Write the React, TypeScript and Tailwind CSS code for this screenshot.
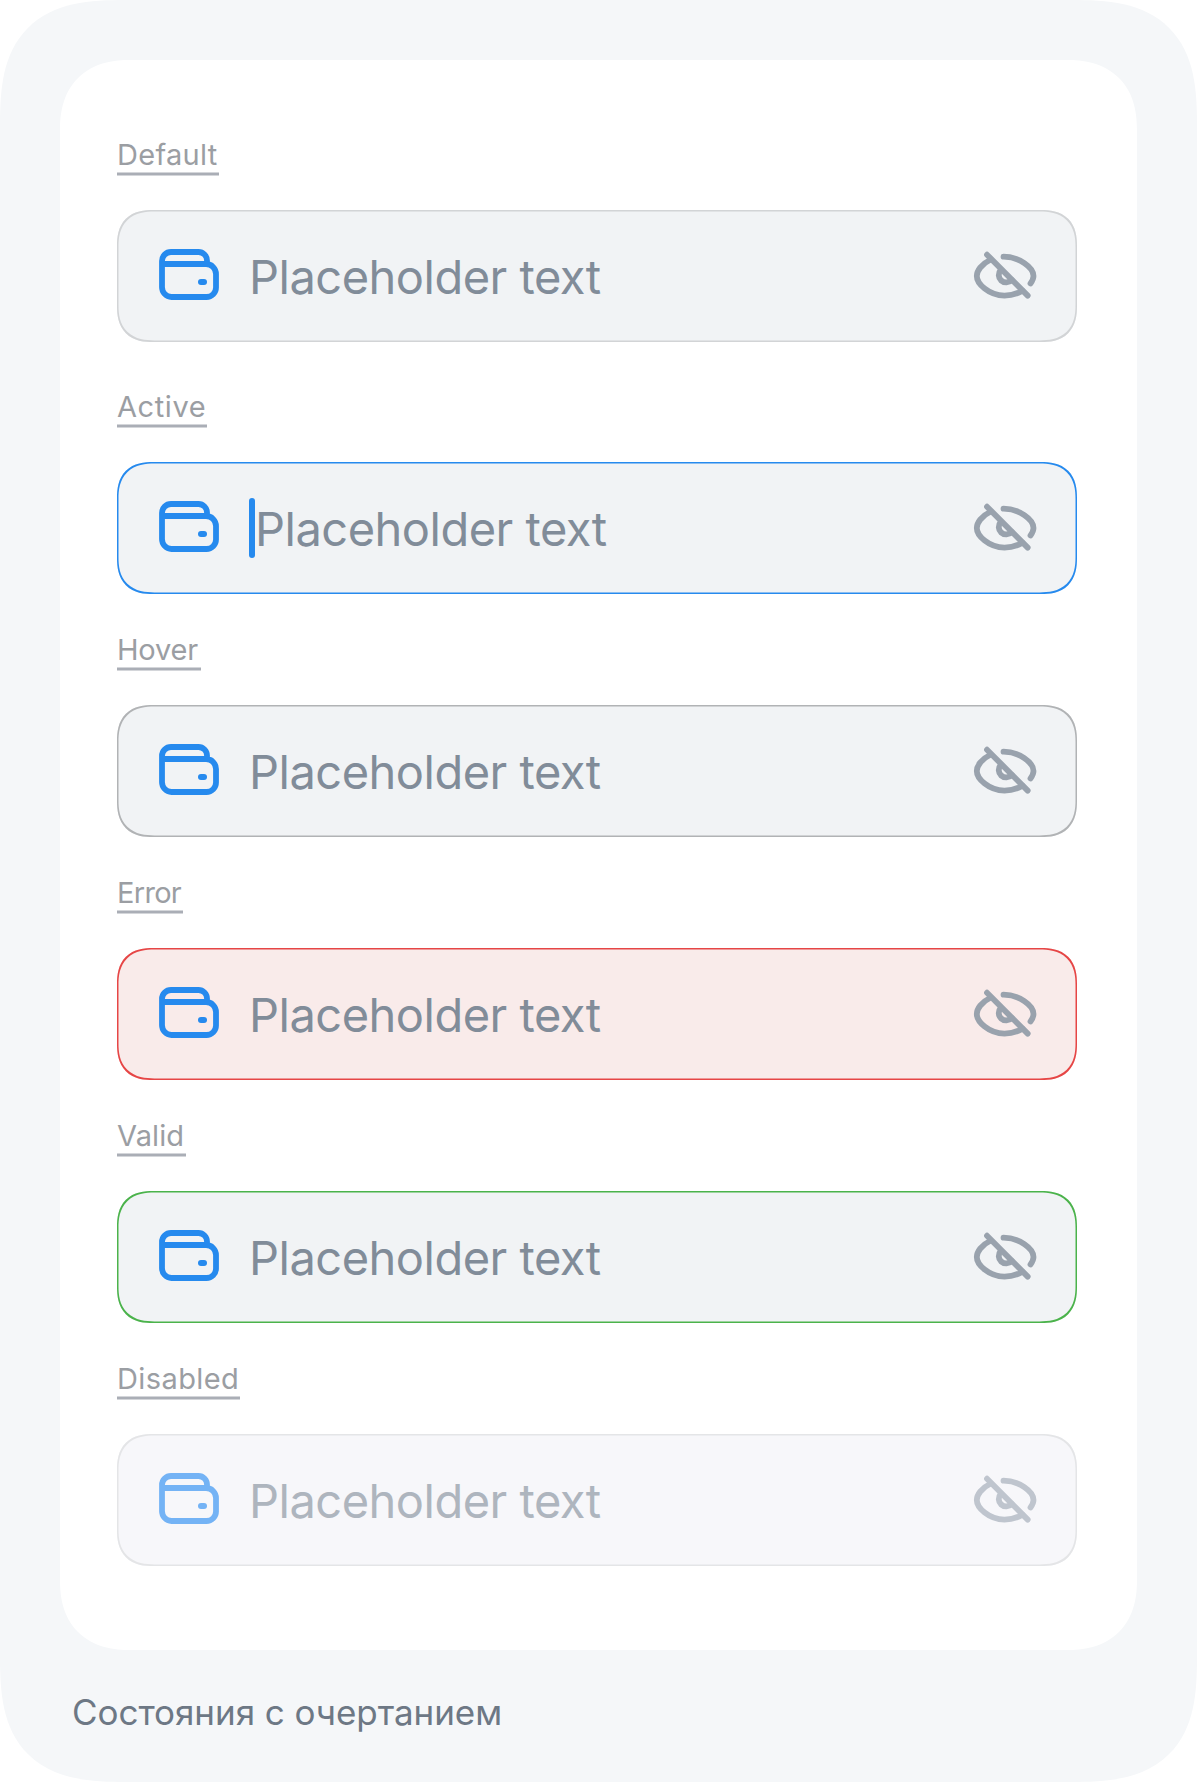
type Field = {
  label: string;
  labelClass: string;
  underline: string;
  block: string;
  box: string;
  active?: boolean;
  disabled?: boolean;
};

const fields: Field[] = [
  { label: "Default", labelClass: "tracking-[0.3px]", underline: "w-[102px]", block: "h-[252px]", box: "bg-[#f1f3f5] shadow-[inset_0_0_0_1.5px_#d2d4d6]" },
  { label: "Active", labelClass: "tracking-[0.6px]", underline: "w-[90px]", block: "h-[243px]", box: "bg-[#f1f3f5] shadow-[inset_0_0_0_1.5px_#268aee]", active: true },
  { label: "Hover", labelClass: "tracking-[-0.2px]", underline: "w-[84px]", block: "h-[243px]", box: "bg-[#f1f3f5] shadow-[inset_0_0_0_1.5px_#b1b3b5]" },
  { label: "Error", labelClass: "tracking-[-0.7px]", underline: "w-[66px]", block: "h-[243px]", box: "bg-[#f9ebea] shadow-[inset_0_0_0_1.5px_#e64646]" },
  { label: "Valid", labelClass: "tracking-[0.1px]", underline: "w-[69px]", block: "h-[243px]", box: "bg-[#f1f3f5] shadow-[inset_0_0_0_1.5px_#4bb34b]" },
  { label: "Disabled", labelClass: "tracking-[0.4px]", underline: "w-[123px]", block: "h-[243px]", box: "bg-[#f7f7fa] shadow-[inset_0_0_0_1.5px_#e4e5e7]", disabled: true },
];

function WalletIcon({ color }: { color: string }) {
  return (
    <svg className={`mb-[2px] h-[52px] w-[60px] shrink-0 ${color}`} viewBox="0 0 60 52" fill="none" stroke="currentColor" strokeWidth="5.8" strokeLinecap="butt">
      <path d="M3 15V37.5A9.500 10 0 0 0 12.500 48H47.5A9.500 9.500 0 0 0 57 38.500V25A10 10 0 0 0 47 15H3V12A9 9 0 0 1 12 3H39.500A8.500 8.500 0 0 1 48 11.500V15" />
      <path d="M42 33H45" strokeWidth="6" strokeLinecap="round" />
    </svg>
  );
}

function EyeOffIcon({ color }: { color: string }) {
  return (
    <svg className={`mb-[2px] h-[50px] w-[66px] shrink-0 ${color}`} viewBox="0 0 66 50" fill="none" stroke="currentColor" strokeWidth="5.8" strokeLinecap="round">
      <path d="M31.500 6.700C47 6.700 61.500 17.500 61.500 26C61.500 28.500 60.300 31 58.500 33.400" />
      <path d="M18 10C9.500 14 4.800 21 4.800 26C4.800 33.500 16.500 45.600 32.500 45.600C39.500 45.600 45.500 43.700 50.500 40.800" />
      <path d="M28.700 20A7.400 7.400 0 1 0 39.700 30" />
      <path d="M15 4.700L55.700 45.600" />
    </svg>
  );
}

function StateField({ field }: { field: Field }) {
  return (
    <section className={`flex flex-col ${field.block}`}>
      <div className="flex h-[47px] flex-col justify-end">
        <div className={`whitespace-nowrap font-['Inter',sans-serif] text-[29px] leading-[32px] text-[#9b9ea3] ${field.labelClass}`}>{field.label}</div>
        <div className={`mt-[1px] h-[4px] border-y border-[#d4d6da] bg-[#aaaeb6] ${field.underline}`} />
      </div>
      <div className={`mt-[34px] flex h-[132px] w-[960px] shrink-0 items-center rounded-[36px] pr-[39px] pl-[42px] [corner-shape:superellipse(1.3)] ${field.box}`}>
        <WalletIcon color={field.disabled ? "text-[#74b3f5]" : "text-[#268aee]"} />
        <div className="ml-[30px] flex flex-1 items-center">
          {field.active && <span className="h-[60px] w-[6px] shrink-0 rounded-full bg-[#268aee]" />}
          <span className={`whitespace-nowrap pt-[2px] font-['Inter',sans-serif] text-[47px] leading-[60px] tracking-[-0.5px] ${field.disabled ? "text-[#aeb5be]" : "text-[#818c99]"}`}>
            Placeholder text
          </span>
        </div>
        <EyeOffIcon color={field.disabled ? "text-[#bfc5ce]" : "text-[#99a2ad]"} />
      </div>
    </section>
  );
}

export default function App() {
  return (
    <div className="h-[1782px] w-[1197px] bg-white">
      <div className="flex h-full w-full flex-col rounded-[126px] bg-[#f5f7f9] px-[60px] pt-[60px] [corner-shape:superellipse(1.47)]">
        <main className="h-[1590px] shrink-0 rounded-[70px] bg-white px-[57px] pt-[69px] [corner-shape:superellipse(1.22)]">
          {fields.map((field) => (
            <StateField key={field.label} field={field} />
          ))}
        </main>
        <p className="mt-[37px] ml-[12px] whitespace-nowrap font-['Inter',sans-serif] text-[35px] leading-[50px] tracking-[-0.05px] text-[#6d7885]">Состояния с очертанием</p>
      </div>
    </div>
  );
}
